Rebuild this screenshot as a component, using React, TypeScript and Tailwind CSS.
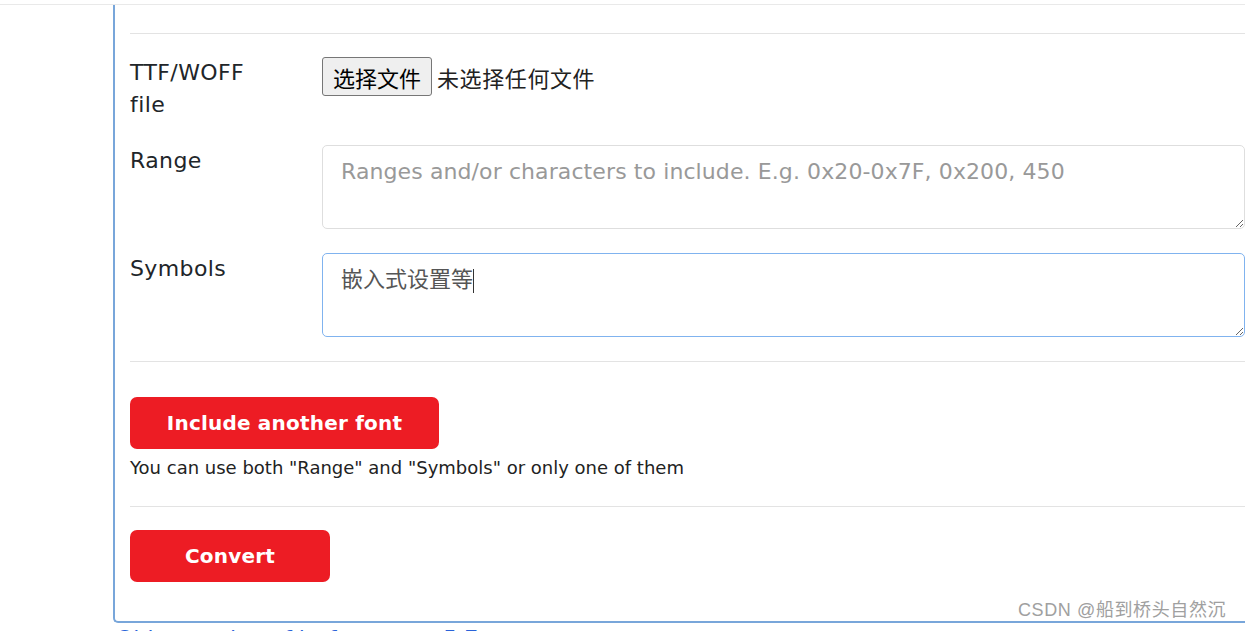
import React from "react";

const sans = { fontFamily: '"DejaVu Sans", "Noto Sans CJK SC", sans-serif' };
const cjk = { fontFamily: '"Noto Sans CJK SC", "DejaVu Sans", sans-serif' };

export default function App() {
  return (
    <div className="relative w-[1245px] h-[631px] overflow-hidden bg-white text-[#212529]" style={sans}>
      <div className="h-[4px]" />
      <div className="h-px w-full bg-[#e9e9e9]" />
      <div className="ml-[113px] w-[1200px] border-l-2 border-b-2 border-[#78a6da] rounded-bl-[5px] pl-[15px]">
        <div className="h-[28px]" />
        <div className="h-px bg-[#e3e3e3]" />

        {/* Row 1 */}
        <div className="flex pt-[23px]">
          <div className="w-[192px] shrink-0 text-[22px] leading-[32px] tracking-[0.4px]">
            TTF/WOFF
            <br />
            file
          </div>
          <div className="flex items-center h-[39px]" style={cjk}>
            <div className="h-[39px] px-[10px] flex items-center border border-[#767676] rounded-[3px] bg-[#efefef] text-[22px] text-black leading-none">
              选择文件
            </div>
            <span className="ml-[5px] text-[22px] text-[#222] leading-none tracking-[0.6px]">未选择任何文件</span>
          </div>
        </div>

        {/* Row 2 */}
        <div className="flex mt-[24px]">
          <div className="w-[192px] shrink-0 text-[22px] leading-[32px] tracking-[0.4px]">Range</div>
          <textarea
            readOnly
            className="block w-[923px] h-[84px] border border-[#dedede] rounded-[5px] px-[18px] pt-[10px] text-[22px] leading-[32px] tracking-[0.1px] outline-none placeholder:text-[#999] text-[#555]"
            style={sans}
            placeholder="Ranges and/or characters to include. E.g. 0x20-0x7F, 0x200, 450"
          />
        </div>

        {/* Row 3 */}
        <div className="flex mt-[24px]">
          <div className="w-[192px] shrink-0 text-[22px] leading-[32px] tracking-[0.4px]">Symbols</div>
          <div className="relative">
            <textarea
              readOnly
              value="嵌入式设置等"
              className="block w-[923px] h-[84px] border border-[#80b3ef] rounded-[5px] px-[18px] pt-[7px] text-[22px] leading-[32px] outline-none text-[#555]"
              style={cjk}
            />
            <div
              className="absolute left-0 top-0 border border-transparent px-[18px] pt-[7px] text-[22px] leading-[32px] text-transparent pointer-events-none"
              style={cjk}
            >
              嵌入式设置等<span className="inline-block w-px h-[24px] bg-[#333] align-middle" />
            </div>
          </div>
        </div>

        <div className="h-px bg-[#e3e3e3] mt-[24px]" />

        <button className="block mt-[35px] w-[309px] h-[52px] rounded-[7px] bg-[#ed1c24] text-white font-bold text-[20px] tracking-[0.2px]" style={sans}>
          Include another font
        </button>
        <div className="mt-[6px] text-[18px] leading-[26px] text-[#222]">
          You can use both "Range" and "Symbols" or only one of them
        </div>

        <div className="h-px bg-[#e3e3e3] mt-[25px]" />

        <button className="block mt-[23px] w-[200px] h-[52px] rounded-[7px] bg-[#ed1c24] text-white font-bold text-[20px] tracking-[0.2px]" style={sans}>
          Convert
        </button>
        <div className="h-[39px]" />
      </div>
      <div className="ml-[116px] mt-[3px] text-[22px] leading-[26px] text-[#2a62d8]">Older version of lv_font_conv 5.7</div>

      <div
        className="absolute left-[1018px] top-[598px] text-[18px] leading-[24px] tracking-[0.6px] text-[#a0a0a0]"
        style={{ fontFamily: '"Liberation Sans", "Noto Sans CJK SC", sans-serif', textShadow: "1px 1px 0 #fff, -1px -1px 0 #fff" }}
      >
        CSDN @船到桥头自然沉
      </div>
    </div>
  );
}
